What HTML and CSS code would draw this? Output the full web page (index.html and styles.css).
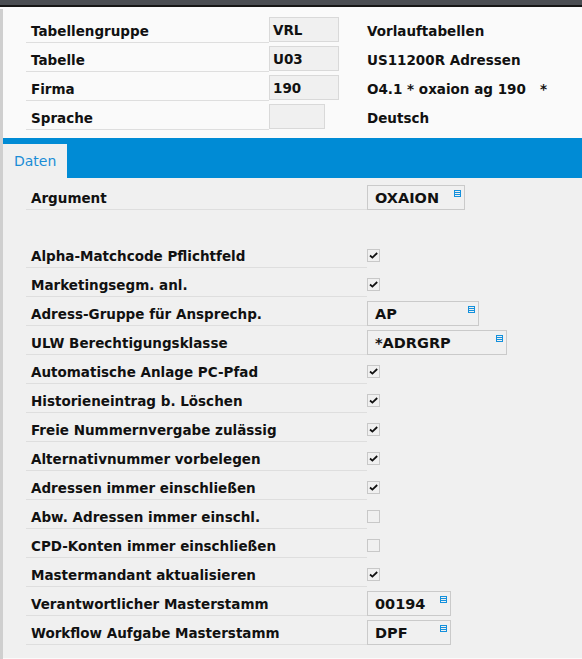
FILE: index.html
```html
<!DOCTYPE html>
<html lang="de">

<head>
    <meta charset="UTF-8">
    <title>Vorlauftabellen</title>
    <link rel="stylesheet" href="styles.css">
</head>

<body>
    <div class="topbar"></div>
    <div class="frame">
        <div class="head">
            <div class="row">
                <div class="row-label">Tabellengruppe</div>
                <div class="head-field"><div class="head-input">VRL</div></div>
                <div class="head-text">Vorlauftabellen</div>
            </div>
            <div class="row">
                <div class="row-label">Tabelle</div>
                <div class="head-field"><div class="head-input">U03</div></div>
                <div class="head-text">US11200R Adressen</div>
            </div>
            <div class="row">
                <div class="row-label">Firma</div>
                <div class="head-field"><div class="head-input">190</div></div>
                <div class="head-text">O4.1 * oxaion ag 190&nbsp;&nbsp;&nbsp;*</div>
            </div>
            <div class="row">
                <div class="row-label">Sprache</div>
                <div class="head-field"><div class="head-input head-input-short"></div></div>
                <div class="head-text">Deutsch</div>
            </div>
        </div>

        <div class="tabbar">
            <div class="tab">Daten</div>
        </div>

        <div class="content" id="content"></div>
    </div>

    <script>
        const contentDom = document.getElementById('content');
        // type: input | check | uncheck | empty
        const rows = [
            { label: 'Argument', type: 'input', value: 'OXAION', width: 98 },
            { type: 'empty' },
            { label: 'Alpha-Matchcode Pflichtfeld', type: 'check' },
            { label: 'Marketingsegm. anl.', type: 'check' },
            { label: 'Adress-Gruppe für Ansprechp.', type: 'input', value: 'AP', width: 112 },
            { label: 'ULW Berechtigungsklasse', type: 'input', value: '*ADRGRP', width: 140 },
            { label: 'Automatische Anlage PC-Pfad', type: 'check' },
            { label: 'Historieneintrag b. Löschen', type: 'check' },
            { label: 'Freie Nummernvergabe zulässig', type: 'check' },
            { label: 'Alternativnummer vorbelegen', type: 'check' },
            { label: 'Adressen immer einschließen', type: 'check' },
            { label: 'Abw. Adressen immer einschl.', type: 'uncheck' },
            { label: 'CPD-Konten immer einschließen', type: 'uncheck' },
            { label: 'Mastermandant aktualisieren', type: 'check' },
            { label: 'Verantwortlicher Masterstamm', type: 'input', value: '00194', width: 84 },
            { label: 'Workflow Aufgabe Masterstamm', type: 'input', value: 'DPF', width: 84 }
        ];

        const listIcon = '<svg class="list-icon" width="7" height="7" viewBox="0 0 7 7">' +
            '<rect x="0.5" y="0.5" width="6" height="6" fill="none" stroke="#1490dc"/>' +
            '<path d="M1 2.5H6M1 4.5H6" stroke="#1490dc"/></svg>';
        const checkMark = '<svg width="9" height="7" viewBox="0 0 9 7">' +
            '<path d="M1 3.5L3.4 5.6L8.2 1" fill="none" stroke="#111" stroke-width="1.8"/></svg>';

        let html = '';
        rows.forEach(function(row) {
            if (row.type === 'empty') {
                html += '<div class="row row-empty"></div>';
                return;
            }
            let value = '';
            if (row.type === 'input') {
                value = '<div class="field" style="width: ' + row.width + 'px">' + row.value + listIcon + '</div>';
            } else {
                value = '<div class="checkbox">' + (row.type === 'check' ? checkMark : '') + '</div>';
            }
            html += '<div class="row"><div class="row-label row-label-wide">' + row.label + '</div>' +
                '<div class="row-value">' + value + '</div></div>';
        });
        contentDom.innerHTML = html;
    </script>
</body>

</html>
```

FILE: styles.css
```css
body {
    background: #FAFAFA;
    margin: 0;
    font-family: "DejaVu Sans", Verdana, sans-serif;
    font-size: 13.5px;
    font-weight: bold;
    color: #111111;
}

.topbar {
    height: 5px;
    background: #4A4D52;
    border-bottom: 2px solid #161616;
}

.frame {
    margin-top: 2px;
    border-left: 3px solid #CFCFCF;
    min-height: 650px;
}

.head {
    padding: 5px 0 8px 23px;
}

.row {
    display: flex;
    height: 29px;
}

.row-label {
    box-sizing: border-box;
    width: 243px;
    height: 29px;
    padding: 4px 0 0 5px;
    line-height: 26px;
    border-bottom: 1px solid #DEDEDE;
}

.row-label-wide {
    width: 341px;
}

.head-field {
    width: 98px;
    display: flex;
    align-items: flex-end;
    padding-bottom: 1px;
    box-sizing: border-box;
}

.head-input {
    box-sizing: border-box;
    width: 70px;
    height: 25px;
    padding-left: 3px;
    line-height: 24px;
    background: #F0F0F0;
    border: 1px solid #D9D9D9;
}

.head-input-short {
    width: 56px;
}

.head-text {
    padding-top: 4px;
    line-height: 26px;
}

.tabbar {
    height: 40px;
    background: #008BD5;
    display: flex;
    align-items: flex-end;
}

.tab {
    height: 34px;
    padding: 0 11px;
    background: #F0F0F0;
    color: #1A8DD6;
    font-weight: normal;
    font-size: 14px;
    line-height: 34px;
}

.content {
    background: #F0F0F0;
    padding: 3px 0 13px 23px;
}

.row-empty {
    height: 29px;
}

.row-value {
    display: flex;
    align-items: flex-end;
}

.field {
    position: relative;
    box-sizing: border-box;
    height: 25px;
    padding-left: 7px;
    font-size: 14.5px;
    line-height: 25px;
    border: 1px solid #CACACA;
}

.list-icon {
    position: absolute;
    top: 4px;
    right: 3px;
}

.checkbox {
    box-sizing: border-box;
    width: 13px;
    height: 13px;
    margin-bottom: 6px;
    border: 1px solid #C8C8C8;
    display: flex;
    align-items: center;
    justify-content: center;
}
```
